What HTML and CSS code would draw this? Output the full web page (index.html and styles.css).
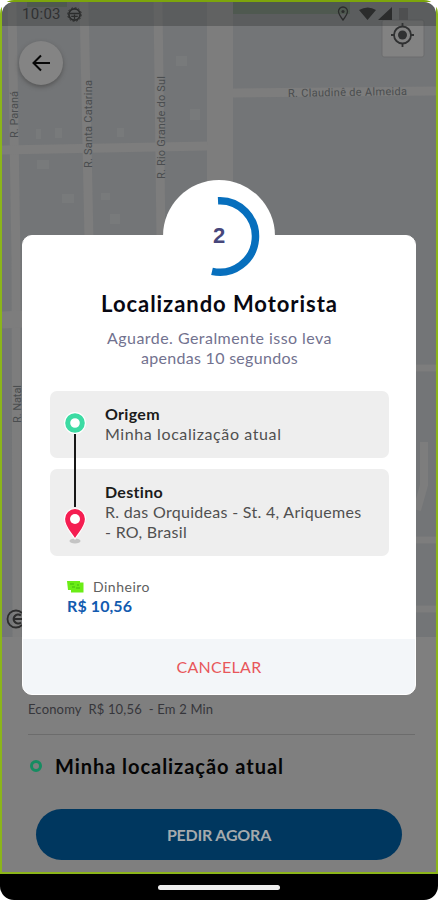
FILE: index.html
```html
<!DOCTYPE html>
<html lang="pt-BR">
<head>
<meta charset="utf-8">
<title>Localizando Motorista</title>
<link rel="stylesheet" href="styles.css">
</head>
<body>
<div class="phone">
  <div class="screen">
    <div class="backdrop">
      <svg class="map" viewBox="2 2 434 635" width="434" height="635">
        <rect x="2" y="2" width="434" height="635" fill="#737577"/>
        <path d="M27 2h40v5H27z M232 2h118v12H232z" fill="#5f6f60"/>
        <g fill="none" stroke="#7d7d7d">
          <path d="M12 2L16 260L17 637" stroke-width="9"/>
          <path d="M84 2L89 240" stroke-width="9"/>
          <path d="M158 2L161 240" stroke-width="9"/>
          <path d="M220 2V240" stroke-width="26"/>
          <path d="M2 150L208 146" stroke-width="9"/>
          <path d="M233 93L436 91" stroke-width="9"/>
          <path d="M2 320L24 319" stroke-width="17"/>
          <path d="M415 368H436M415 540H436M415 609H436" stroke-width="7"/>
          <path d="M424 442V485L417 510" stroke-width="8"/>
        </g>
        <path d="M176 56h11v10h-11zM190 109h10v11h-10zM37 160h12v9H37zM62 194h12v9H62zM101 193h9v7h-9zM110 214h10v10h-10zM36 129h5v10h-5zM55 128h7v10h-7zM117 128h7v9h-7z" fill="#787a7b"/>
        <g class="map-label">
          <text transform="translate(18 138) rotate(-90)" textLength="47">R. Paraná</text>
          <text transform="translate(92 168) rotate(-90)" textLength="88">R. Santa Catarina</text>
          <text transform="translate(165 179) rotate(-90)" textLength="103">R. Rio Grande do Sul</text>
          <text transform="translate(21 423) rotate(-90)" textLength="38">R. Natal</text>
          <text transform="translate(288 97) rotate(-1)" textLength="119">R. Claudinê de Almeida</text>
        </g>
        <g fill="none" stroke="#2d2d2d">
          <path d="M22 613a8.500 8.500 0 1 0 0 12" stroke-width="1.800"/><path d="M21 615.500a4.500 4.500 0 1 0 0 7M14 619h8" stroke-width="2.200"/>
        </g>
        <rect x="382" y="20" width="42" height="37" rx="2" fill="#828282" stroke="#6c6d6e"/>
        <g fill="none" stroke="#303132" stroke-width="1.800">
          <circle cx="402.500" cy="35" r="8.500"/>
          <path d="M402.500 23v4M402.500 43v4M391 35h4M410 35h4"/>
        </g>
        <circle cx="402.500" cy="35" r="4.500" fill="#303132"/>
      </svg>
      <section class="sheet">
        <p class="fare">Economy&nbsp; R$ 10,56&nbsp; - Em 2 Min</p>
        <div class="pickup"><i class="pickup-dot"></i><b class="pickup-text">Minha localização atual</b></div>
        <button class="order"><span>PEDIR AGORA</span></button>
      </section>
    </div>
    <header class="top">
      <div class="status">
        <span class="clock">10:03</span>
        <svg width="15" height="15" viewBox="0 0 16 16" fill="none" stroke="#2b2c2c"><circle cx="8" cy="8" r="6" stroke-width="1.800"/><circle cx="8" cy="8" r="7.300" stroke-dasharray="2 1.820"/><path d="M3 7h10" stroke-width="1.500"/><path d="M8 8v5M4.500 10h7" stroke-width="1.300"/></svg>
        <svg class="signals" width="80" height="16" viewBox="0 0 80 16"><path d="M3 14C0 10-1.500 8-1.500 5.500a4.500 4.500 0 0 1 9 0C7.500 8 6 10 3 14z" fill="none" stroke="#2b2c2c" stroke-width="1.300"/><circle cx="3" cy="5.500" r="1.600" fill="#2b2c2c"/><path d="M19 4q9-5 17 0l-8.500 10zM52 1v13H38z" fill="#2b2c2c"/><rect x="59" y="2" width="9" height="12" fill="#4e4f50"/></svg>
      </div>
      <button class="back" aria-label="Voltar"><svg width="20" height="18" viewBox="0 0 20 18" fill="none" stroke="#070707" stroke-width="2"><path d="M19 9H3M10 1.500L2.500 9l7.500 7.500"/></svg></button>
    </header>
    <main class="dialog">
      <div class="timer">
        <svg width="110" height="110" viewBox="0 0 110 110"><path d="M53 19.800a35.700 35.700 0 1 1-6 70.500" fill="none" stroke="#076fbd" stroke-width="7.500"/></svg>
        <span class="count">2</span>
      </div>
      <div class="card">
        <div class="content">
          <h1><span>Localizando Motorista</span></h1>
          <p class="wait"><span class="wait-a">Aguarde. Geralmente isso leva</span><br><span class="wait-b">apendas 10 segundos</span></p>
          <div class="route">
            <div class="stop origin"><b>Origem</b><span class="addr-a">Minha localização atual</span></div>
            <div class="stop destination"><b>Destino</b><span>R. das Orquideas - St. 4, Ariquemes</span><span>- RO, Brasil</span></div>
            <svg class="track" width="26" height="136" viewBox="0 0 26 136">
              <path d="M13 24v73" stroke="#171717" stroke-width="2"/>
              <circle cx="13" cy="13" r="11" fill="#fff"/><circle cx="13" cy="13" r="7.300" fill="#fff" stroke="#3cdba3" stroke-width="5"/>
              <ellipse cx="13" cy="131" rx="5.500" ry="2.500" fill="#c4c4c4"/>
              <path d="M13 129C8 121 2.500 117 2.500 109a10.500 10.500 0 0 1 21 0C23.500 117 18 121 13 129z" fill="#f51d51" stroke="#fff" stroke-width="1.200"/><circle cx="13" cy="109" r="5" fill="#fff"/>
            </svg>
          </div>
          <div class="payment">
            <div class="method"><svg width="17" height="13" viewBox="0 0 17 13"><path d="M0 1h13v1.500h3.500V12.500H4V10H1z" fill="#6bed16"/><path d="M3 4h4M9 8h4M11 4v2M5 7h3" stroke="#43b90c" fill="none"/></svg><span class="cash">Dinheiro</span></div>
            <b class="price">R$ 10,56</b>
          </div>
        </div>
        <button class="cancel"><span>CANCELAR</span></button>
      </div>
    </main>
  </div>
  <div class="navbar"><i class="handle"></i></div>
</div>
</body>
</html>
```
FILE: styles.css
```css
* { box-sizing: border-box; margin: 0; }
body { background: #fff; font-family: Lato, "Liberation Sans", sans-serif; }
button { border: 0; padding: 0; font-family: inherit; }
span, b { white-space: nowrap; }
.phone { width: 438px; height: 900px; border-radius: 14px; overflow: hidden; background: #fff; display: flex; flex-direction: column; }
.screen { height: 874px; border: 2px solid #8bb51a; border-top-color: #7da50c; display: grid; grid-template: 870px / 434px; }
.screen > * { grid-area: 1 / 1; }
.backdrop { display: flex; flex-direction: column; overflow: hidden; border-radius: 12px 12px 0 0; }
.map { display: block; flex: none; }
.map-label { font: 11px Roboto, sans-serif; fill: #4a4d4f; }
.sheet { flex: 1; background: #7f7f7f; padding: 63px 21px 0 26px; }
.fare { height: 35px; border-bottom: 1px solid #6c6c6c; color: #36363b; font-size: 13px; line-height: 18px; letter-spacing: .17px; white-space: nowrap; }
.pickup { display: flex; align-items: center; gap: 13px; height: 61px; padding-left: 2px; }
.pickup-dot { width: 12px; height: 12px; border: 3px solid #168c61; border-radius: 50%; }
.pickup-text { font-size: 20px; color: #050505; letter-spacing: .95px; }
.order { display: flex; align-items: center; justify-content: center; width: 366px; height: 51px; margin: 13px 0 0 8px; border-radius: 26px; background: #00375f; color: #a5aaad; font-size: 16px; font-weight: 700; letter-spacing: -.2px; }
.top { display: flex; flex-direction: column; align-items: flex-start; }
.status { display: flex; align-items: center; width: 434px; height: 24px; padding: 0 16px 0 20px; gap: 6px; background: rgba(55, 57, 58, .4); border-radius: 12px 12px 0 0; }
.clock { font: 15px Roboto, sans-serif; color: #303132; letter-spacing: .3px; }
.signals { margin-left: auto; overflow: visible; }
.back { display: flex; align-items: center; justify-content: center; width: 44px; height: 44px; margin: 15px 0 0 17px; border-radius: 50%; background: #848484; box-shadow: 0 2px 4px #555; }
.dialog { display: flex; flex-direction: column; align-items: center; padding-top: 178px; }
.timer { display: grid; place-items: center; width: 112px; height: 112px; margin-bottom: -57px; border-radius: 50%; background: #fff; z-index: 1; }
.timer > * { grid-area: 1 / 1; }
.timer svg { margin-left: 2px; }
.count { font: bold 22px "Liberation Sans", sans-serif; color: #47477b; }
.card { width: 394px; height: 460px; border: 1px solid #fff; border-radius: 10px; background: #fff; overflow: hidden; display: flex; flex-direction: column; }
.content { height: 403px; padding: 54px 26px 0 27px; }
h1 { font-size: 22px; line-height: 28px; text-align: center; color: #080812; letter-spacing: .95px; }
.wait { margin-top: 10px; font-size: 16px; line-height: 20px; text-align: center; color: #72728f; }
.wait-a { letter-spacing: .45px; }
.wait-b { letter-spacing: .3px; }
.route { display: grid; gap: 11px; grid-template: 67px 87px / 339px; margin-top: 23px; }
.stop { grid-column: 1; display: flex; flex-direction: column; align-items: flex-start; padding: 13px 0 0 55px; border-radius: 7px; background: #eee; color: #505050; font-size: 16px; line-height: 20px; letter-spacing: .3px; }
.origin { grid-row: 1; }
.destination { grid-row: 2; }
.addr-a { letter-spacing: .6px; }
.stop b { color: #1b1b1b; }
.track { grid-column: 1; grid-row: 1 / 3; margin: 19px 0 0 12px; }
.payment { padding: 20px 0 0 17px; }
.method { display: flex; align-items: center; gap: 9px; height: 20px; color: #606060; font-size: 14px; letter-spacing: .5px; }
.price { display: block; font-size: 16px; line-height: 19px; color: #125baf; letter-spacing: .1px; }
.cancel { flex: 1; display: flex; align-items: center; justify-content: center; background: #f3f6f9; color: #e8575b; font-size: 16px; letter-spacing: .3px; }
.navbar { flex: 1; display: flex; align-items: center; justify-content: center; background: #000; }
.handle { width: 122px; height: 5px; border-radius: 3px; background: #eee; }
```
